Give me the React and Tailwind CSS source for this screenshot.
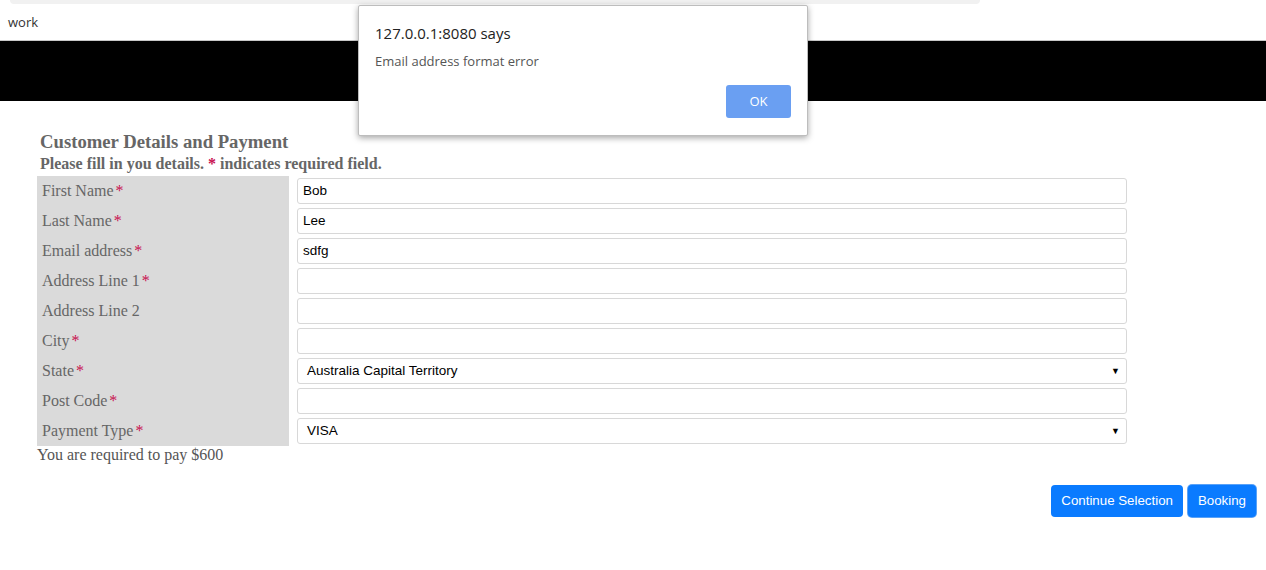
const fields = [
  { label: "First Name", required: true, value: "Bob" },
  { label: "Last Name", required: true, value: "Lee" },
  { label: "Email address", required: true, value: "sdfg" },
  { label: "Address Line 1", required: true, value: "" },
  { label: "Address Line 2", required: false, value: "" },
  { label: "City", required: true, value: "" },
  { label: "State", required: true, value: "Australia Capital Territory", select: true },
  { label: "Post Code", required: true, value: "" },
  { label: "Payment Type", required: true, value: "VISA", select: true },
];

const Star = ({ className = "" }) => <span className={`text-[#c8104f] ${className}`}>*</span>;

const FieldRow = ({ field }) => (
  <div className="flex h-[30px]">
    <div className="w-[252px] bg-[#dadada] pl-[5px] flex items-center text-[16px] text-[#666]">
      {field.label}
      {field.required && <Star className="ml-[2px]" />}
    </div>
    <div className="flex items-center pl-[8px]">
      <div className="w-[830px] h-[26px] border border-[#d8d8d8] rounded-[3px] bg-white flex items-center justify-between pl-[5px] pr-[6px] font-['Liberation_Sans',Arial,sans-serif] text-[13.5px] text-black">
        <span className={field.select ? "pl-[4px]" : ""}>{field.value}</span>
        {field.select && <span className="text-[9px] leading-none">▼</span>}
      </div>
    </div>
  </div>
);

const AlertDialog = () => (
  <div className="absolute left-[358px] top-[5px] w-[450px] h-[131px] bg-white border border-[#bdbdbd] rounded-[2px] shadow-[0_2px_6px_rgba(0,0,0,0.35)] font-['Open_Sans',sans-serif]">
    <div className="pl-[16px] pt-[16px] text-[15px] text-[#222]">127.0.0.1:8080 says</div>
    <div className="pl-[16px] pt-[7px] text-[13px] text-[#555]">Email address format error</div>
    <div className="flex justify-end pr-[16px] pt-[14px]">
      <button className="w-[65px] h-[33px] rounded-[3px] bg-[#6a9ff2] text-white text-[13px]">OK</button>
    </div>
  </div>
);

export default function App() {
  return (
    <div className="relative w-[1266px] h-[570px] bg-white font-['Liberation_Serif','Times_New_Roman',serif] overflow-hidden">
      <div className="ml-[10px] w-[970px] h-[4px] bg-[#f1f1f1] rounded-b-[6px]" />
      <div className="h-[36px] flex items-center pl-[8px] pt-[2px] font-['Open_Sans',sans-serif] text-[13px] text-[#333]">work</div>
      <div className="h-[61px] bg-black border-t border-[#c8c8c8]" />

      <div className="pl-[37px] pt-[29px]">
        <h2 className="pl-[3px] text-[18.7px] font-bold text-[#666] leading-[23px]">Customer Details and Payment</h2>
        <p className="pl-[3px] text-[16px] font-bold text-[#666] leading-[22px]">
          Please fill in you details. <Star /> indicates required field.
        </p>
        <div className="mt-[1px]">
          {fields.map((f) => (
            <FieldRow key={f.label} field={f} />
          ))}
        </div>
        <p className="text-[16px] text-[#555] leading-[18px]">You are required to pay $600</p>
      </div>

      <div className="flex justify-end gap-[5px] pr-[10px] mt-[21px] font-['Liberation_Sans',Arial,sans-serif]">
        <button className="h-[32px] px-[10px] rounded-[4px] bg-[#0a7bff] text-white text-[13.3px]">Continue Selection</button>
        <button className="h-[32px] px-[10px] rounded-[4px] bg-[#0a7bff] text-white text-[13.3px] ring-1 ring-[#5aa2f7]">Booking</button>
      </div>

      <AlertDialog />
    </div>
  );
}
